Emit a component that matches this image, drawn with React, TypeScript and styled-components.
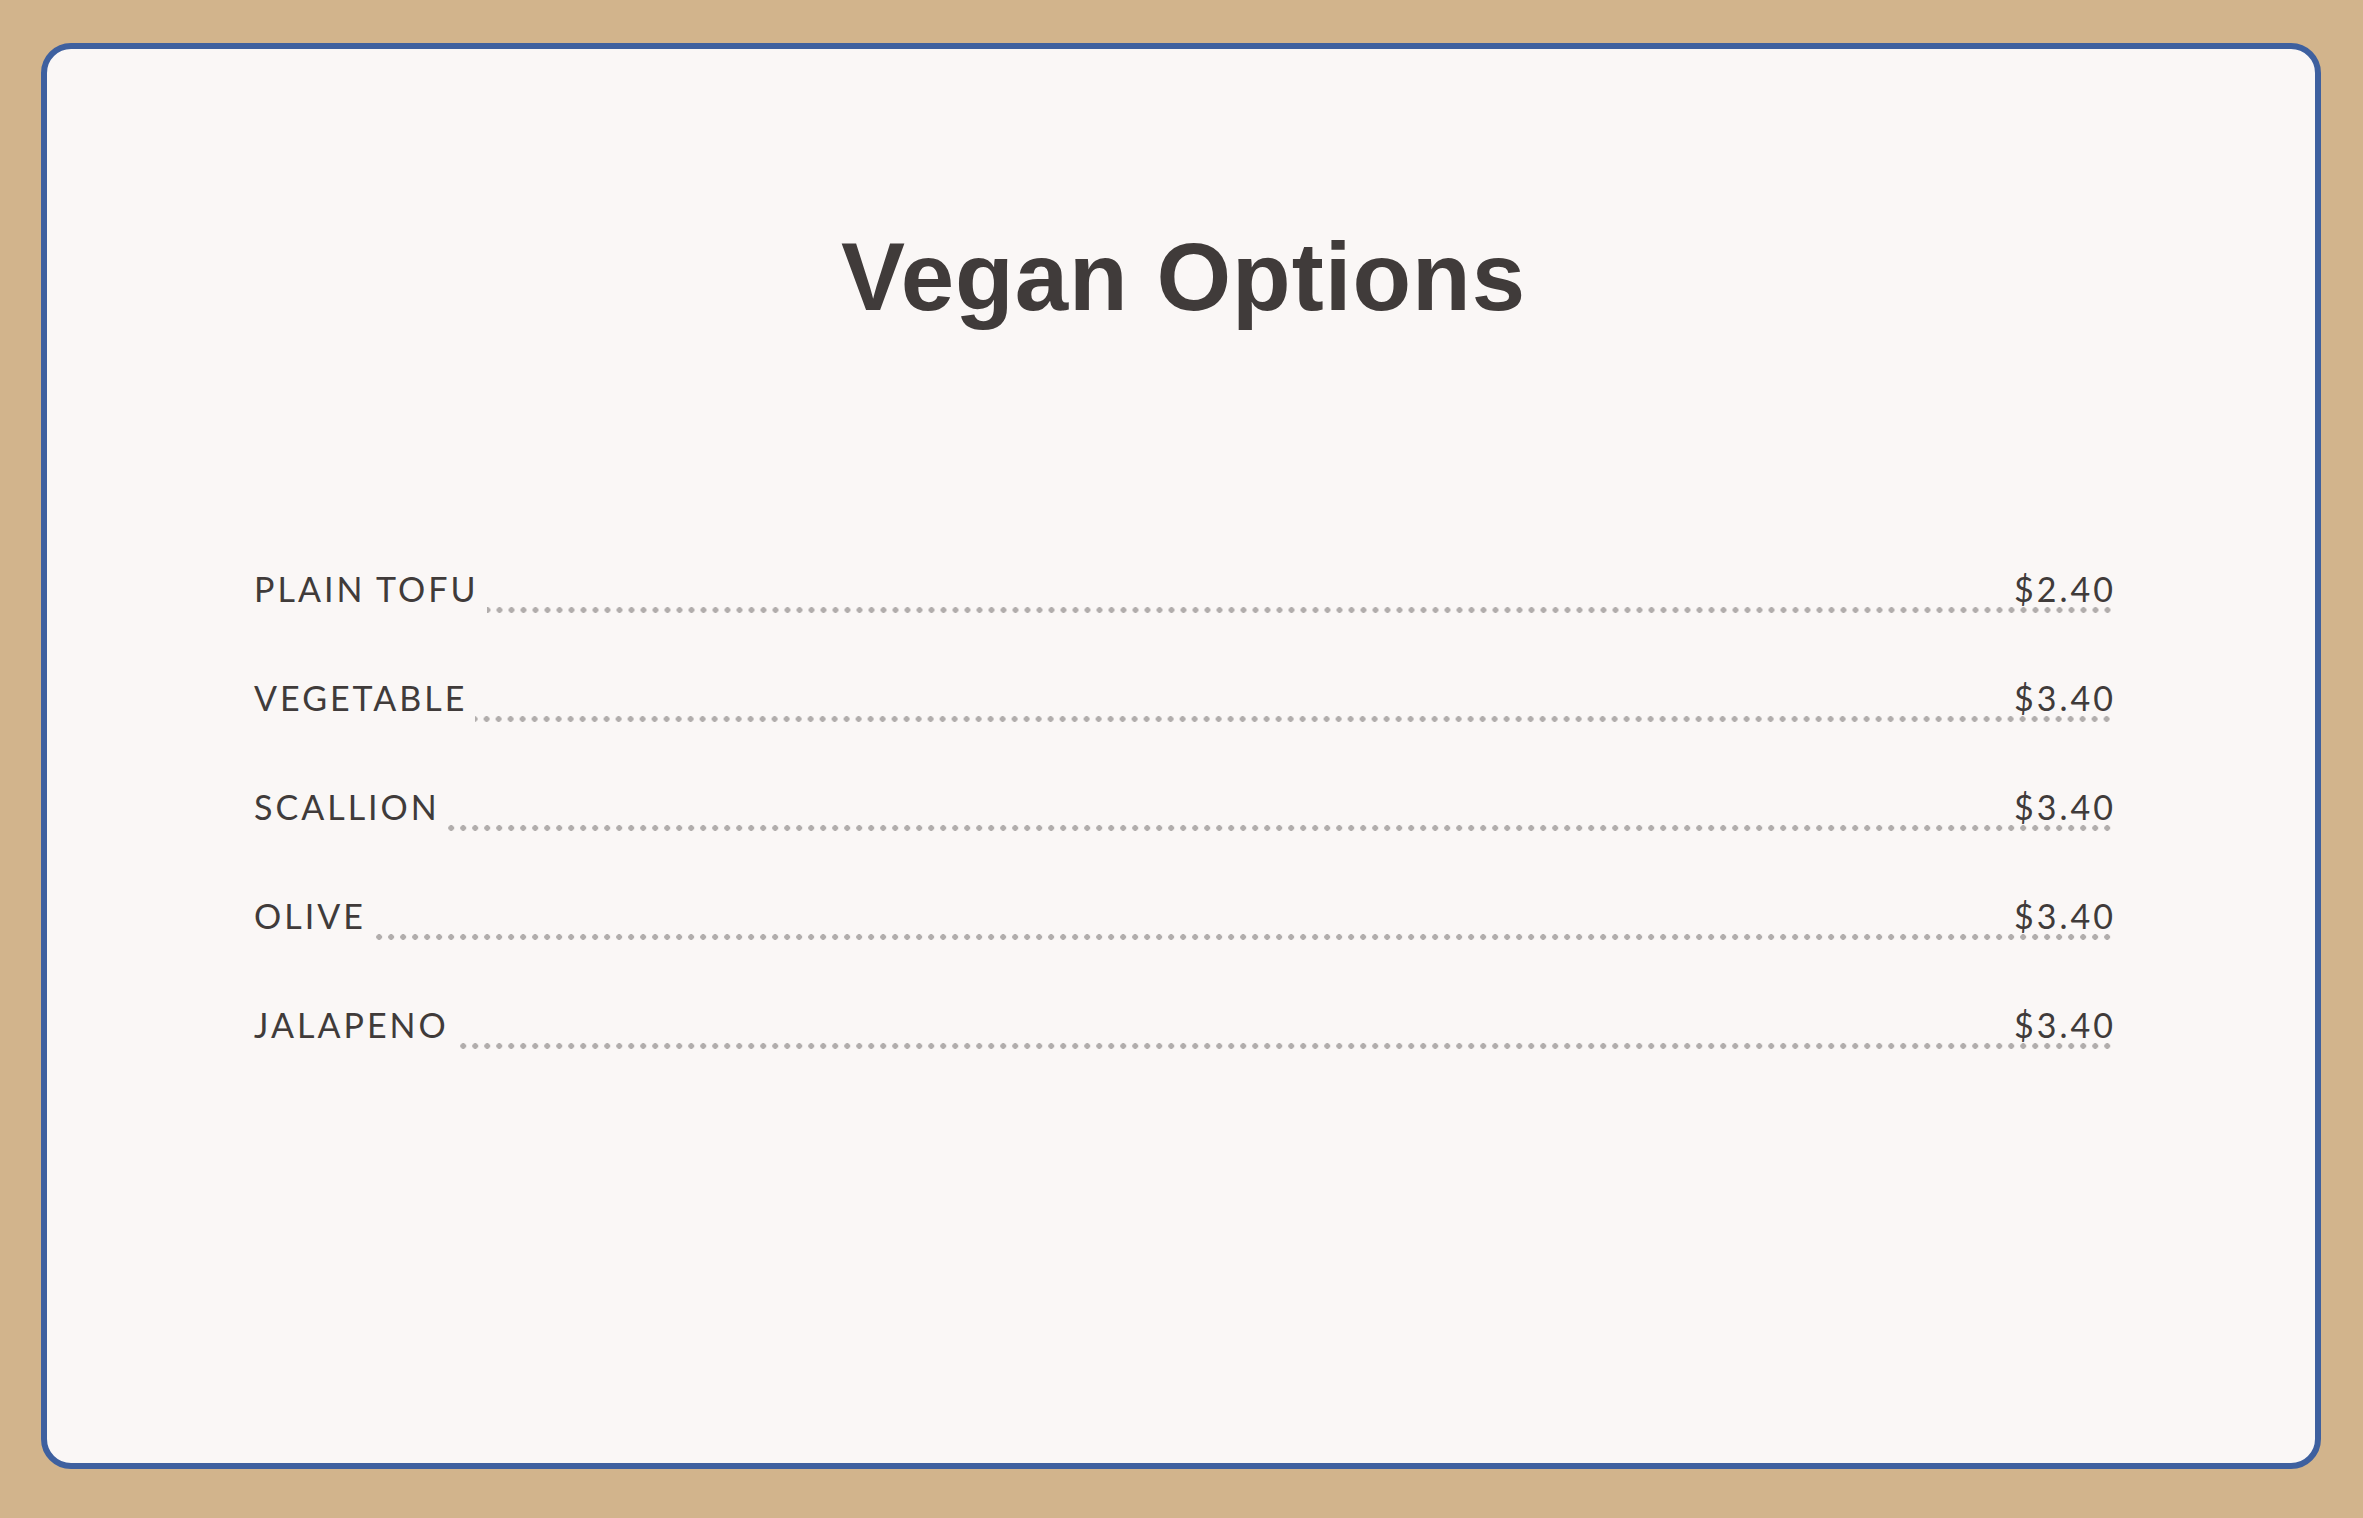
import React from 'react';
import styled, { createGlobalStyle } from 'styled-components';

const GlobalStyle = createGlobalStyle`
  html, body {
    margin: 0;
    padding: 0;
    background-color: #d2b48c;
  }

  * {
    box-sizing: border-box;
  }
`;

const Page = styled.div`
  display: flex;
  min-height: 100vh;
  padding: 43px 42px 49px 41px;
  background-color: #d2b48c;
`;

const Card = styled.div`
  flex: 1;
  display: flex;
  flex-direction: column;
  padding: 173px 202px 0 207px;
  background-color: #faf7f6;
  border: 6px solid #3e609f;
  border-radius: 30px;
`;

const Title = styled.h1`
  margin: 0;
  text-align: center;
  font-family: "Liberation Sans", Arial, sans-serif;
  font-size: 96px;
  font-weight: 700;
  line-height: normal;
  letter-spacing: 1px;
  color: #403b3a;
`;

const MenuList = styled.ul`
  list-style: none;
  margin: 240px 0 0;
  padding: 0;
  display: flex;
  flex-direction: column;
  gap: 68px;
`;

const Row = styled.li`
  display: flex;
  align-items: flex-end;
`;

const Name = styled.span`
  padding-bottom: 7px;
  padding-right: 8px;
  font-family: Lato, "Open Sans", sans-serif;
  font-size: 34px;
  line-height: 1;
  letter-spacing: 3px;
  color: #403b3a;
  white-space: nowrap;
`;

const Leader = styled.div`
  flex: 1;
  display: flex;
  justify-content: flex-end;
  padding-bottom: 7px;
  background-image: radial-gradient(circle, #b1adac 2.6px, transparent 3.1px);
  background-size: 12px 6px;
  background-repeat: repeat-x;
  background-position: right bottom;
`;

const Price = styled.span`
  margin-right: -3px;
  font-family: Lato, "Open Sans", sans-serif;
  font-size: 34px;
  line-height: 1;
  letter-spacing: 3px;
  color: #403b3a;
`;

interface MenuItem {
  name: string;
  price: string;
}

const items: MenuItem[] = [
  { name: 'PLAIN TOFU', price: '$2.40' },
  { name: 'VEGETABLE', price: '$3.40' },
  { name: 'SCALLION', price: '$3.40' },
  { name: 'OLIVE', price: '$3.40' },
  { name: 'JALAPENO', price: '$3.40' },
];

const App = () => {
  return (
    <>
      <GlobalStyle />
      <Page>
        <Card>
          <Title>Vegan Options</Title>
          <MenuList>
            {items.map((item) => (
              <Row key={item.name}>
                <Name>{item.name}</Name>
                <Leader>
                  <Price>{item.price}</Price>
                </Leader>
              </Row>
            ))}
          </MenuList>
        </Card>
      </Page>
    </>
  );
};

export default App;
